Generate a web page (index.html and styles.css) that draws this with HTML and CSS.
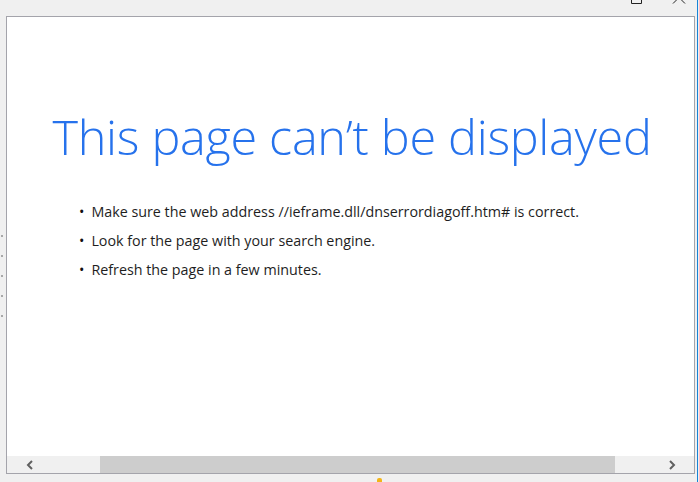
FILE: index.html
```html
<!DOCTYPE html>
<html lang="en">
<head>
<meta charset="utf-8">
<title>This page can’t be displayed</title>
<link rel="stylesheet" href="styles.css">
</head>
<body>
<div class="window">
  <div class="gutter">
    <span class="dot"></span><span class="dot"></span><span class="dot"></span><span class="dot"></span><span class="dot"></span>
  </div>
  <div class="column">
    <div class="titlebar">
      <svg class="controls" width="80" height="16" viewBox="0 0 80 16">
        <path d="M16.5 -4 V3.5 H26.5 V-4" fill="none" stroke="#222" stroke-width="1"/>
        <path d="M58 3.5 L64 -2.5 M70 3.5 L64 -2.5" fill="none" stroke="#222" stroke-width="1"/>
      </svg>
    </div>
    <div class="frame">
      <div class="page">
        <h1 class="title">This page can’t be displayed</h1>
        <ul class="tips">
          <li>Make sure the web address //ieframe.dll/dnserrordiagoff.htm# is correct.</li>
          <li>Look for the page with your search engine.</li>
          <li>Refresh the page in a few minutes.</li>
        </ul>
      </div>
      <div class="hscroll">
        <div class="arrow">
          <svg width="10" height="10" viewBox="0 0 10 10"><path d="M7 1 L3 5 L7 9" fill="none" stroke="#606060" stroke-width="2"/></svg>
        </div>
        <div class="track"><div class="thumb"></div></div>
        <div class="arrow">
          <svg width="10" height="10" viewBox="0 0 10 10"><path d="M3 1 L7 5 L3 9" fill="none" stroke="#606060" stroke-width="2"/></svg>
        </div>
      </div>
    </div>
    <div class="status"><span class="spark"></span></div>
  </div>
  <div class="edge"><span class="blue"></span></div>
</div>
</body>
</html>
```
FILE: styles.css
```css
html, body {
  margin: 0;
  padding: 0;
  height: 482px;
  overflow: hidden;
  background: #f0f0f0;
}
.window {
  display: flex;
  height: 482px;
}
.gutter {
  width: 6px;
  display: flex;
  flex-direction: column;
  padding-top: 235px;
  gap: 18px;
  box-sizing: border-box;
}
.dot {
  display: block;
  width: 2px;
  height: 2px;
  margin-left: 1px;
  background: #a8a8a8;
}
.column {
  width: 689px;
  display: flex;
  flex-direction: column;
}
.titlebar {
  height: 16px;
  display: flex;
  justify-content: flex-end;
}
.controls {
  display: block;
}
.frame {
  height: 458px;
  border: 1px solid #a4a4ab;
  box-sizing: border-box;
  display: flex;
  flex-direction: column;
  background: #fff;
}
.page {
  flex: 1;
  background: #fff;
  overflow: hidden;
}
.title {
  margin: 89px 0 0 3px;
  text-align: center;
  font-family: "Open Sans", "Noto Sans", sans-serif;
  font-weight: 300;
  font-size: 48.6px;
  line-height: 60px;
  color: #2672ec;
  letter-spacing: -0.3px;
}
.tips {
  margin: 31px 0 0 0;
  padding: 0 0 0 72px;
  list-style: none;
  font-family: "Open Sans", "Noto Sans", sans-serif;
  font-size: 14.3px;
  line-height: 29px;
  color: #1e1e1e;
}
.tips li {
  display: flex;
  gap: 7px;
}
.tips li::before {
  content: "•";
  color: #111;
}
.hscroll {
  height: 17px;
  display: flex;
  background: #f0f0f0;
}
.arrow {
  width: 45px;
  display: flex;
  align-items: center;
  justify-content: center;
}
.track {
  flex: 1;
  display: flex;
}
.thumb {
  margin-left: 48px;
  width: 515px;
  background: #cdcdcd;
}
.status {
  flex: 1;
  position: relative;
}
.spark {
  position: absolute;
  left: 371px;
  top: 4px;
  width: 5px;
  height: 5px;
  background: #f2b418;
  border-radius: 2px 2px 0 0;
}
.edge {
  flex: 1;
  display: flex;
  justify-content: flex-end;
  padding-right: 1px;
}
.blue {
  width: 1px;
  background: #1883d7;
}
```
